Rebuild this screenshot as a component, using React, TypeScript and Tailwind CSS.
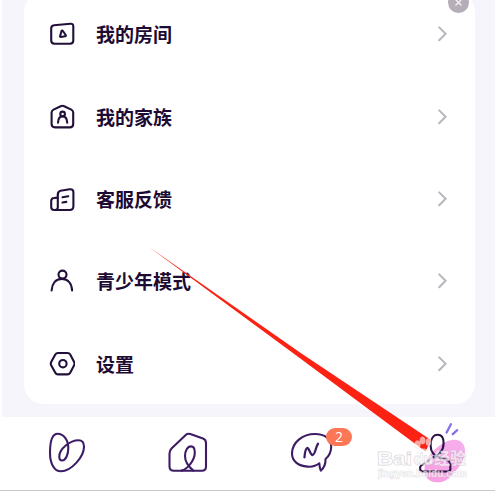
import type { ReactNode } from "react";

const rows: { label: string; icon: ReactNode }[] = [
  {
    label: "我的房间",
    icon: (
      <>
        <path d="M5 4.3 L21.5 2.7 Q24.3 2.5 24.3 5.3 V19.5 Q24.3 22.7 21 22.7 H5.5 Q2.2 22.7 2.2 19.5 V7.5 Q2.2 4.6 5 4.3 Z" />
        <path d="M12.6 9.8 Q13.3 9 13.9 10 L16.7 14 Q17.2 15 16.1 15.2 L11.8 16 Q10.9 16 11.1 15 Z" />
      </>
    ),
  },
  {
    label: "我的家族",
    icon: (
      <>
        <path d="M11.7 2.2 Q13.5 1.4 15.2 2.2 L22.3 5.6 Q24.2 6.6 24.2 8.6 V20 Q24.2 23.4 20.8 23.4 H6 Q2.6 23.4 2.6 20 V8.6 Q2.6 6.6 4.5 5.6 Z" />
        <circle cx="13.6" cy="9.9" r="2.3" />
        <path d="M9 18.7 C9.2 15 11 12.4 13.6 12.4 C16.2 12.4 18 15 18.2 18.7" />
      </>
    ),
  },
  {
    label: "客服反馈",
    icon: (
      <>
        <path d="M8.8 8.5 Q8.8 5.5 11.5 4.8 L20.7 3.3 Q24.4 2.9 24.4 6.3 V20.3 Q24.4 24 20.7 24 H5.2 Q2.2 24 2.2 21 V15 Q2.2 12.2 5 12 L8.5 11.6" />
        <path d="M8.8 8.5 V21.5 Q8.8 24 6 24 M13.5 11.2 L19.3 10.2 M13.5 16.5 L17.3 15.9" />
      </>
    ),
  },
  {
    label: "青少年模式",
    icon: (
      <>
        <circle cx="13.5" cy="6.6" r="4" />
        <path d="M2.6 22.5 C3 15.5 6.6 10.9 12.8 10.9 C19 10.9 22.8 15.5 23.1 22.5" />
      </>
    ),
  },
  {
    label: "设置",
    icon: (
      <>
        <path d="M9 2 H18.5 Q20.3 2 21.2 3.6 L25 10.8 Q26 12.7 25 14.5 L21.2 21.7 Q20.3 23.4 18.5 23.4 H9 Q7.2 23.4 6.3 21.7 L2.3 14.5 Q1.3 12.7 2.3 10.8 L6.3 3.6 Q7.2 2 9 2 Z" />
        <circle cx="13.9" cy="12.7" r="3.7" />
      </>
    ),
  },
];

function NavIcon({ children }: { children: ReactNode }) {
  return (
    <div className="flex w-[124px] shrink-0 justify-center pt-1">
      <svg className="h-16 w-16" viewBox="0 0 64 64" fill="none" stroke="#3d1c66" strokeWidth="2.1" strokeLinecap="round" strokeLinejoin="round">
        {children}
      </svg>
    </div>
  );
}

export default function App() {
  return (
    <div className="relative flex h-[491px] w-[495px] flex-col overflow-hidden bg-white font-['Noto_Sans_CJK_SC',sans-serif]">
      <div className="ml-0.5 h-[417px] shrink-0 bg-[#f6f5fc] pr-5 pl-[22px]">
        <div className="-mt-2 h-[412px] rounded-[20px] bg-white pt-px">
          {rows.map((row) => (
            <div key={row.label} className="flex h-[82.4px] items-center pr-7 pl-[25px]">
              <svg className="h-[26px] w-[26px] shrink-0" viewBox="0 0 26 26" fill="none" stroke="#22103a" strokeWidth="2.1" strokeLinecap="round" strokeLinejoin="round">
                {row.icon}
              </svg>
              <span className="ml-[21px] flex-1 text-[19px] leading-6 font-bold text-[#1d0b33]">{row.label}</span>
              <svg className="h-4 w-[9px]" viewBox="0 0 9 16" fill="none" stroke="#b9b5bd" strokeWidth="2" strokeLinecap="round">
                <path d="M1.2 1.4 L7.6 7.8 L1.2 14.2" />
              </svg>
            </div>
          ))}
        </div>
      </div>

      <nav className="flex h-[73px] shrink-0 bg-white pl-1">
        <NavIcon>
          <path d="M23.7 12.8 C18 12.8 16 22 16 32 C16 42 20 50.3 27 50.3 C37 50.3 50 36 50 25.7 C50 21 48 19.2 44.5 19.2 C36 19.2 25.3 28 25.3 35.5 C25.3 38 26 39.5 28 39.5 C32 39.5 34.3 33 34.3 27 C34.3 19 29.5 12.8 23.7 12.8 Z" />
        </NavIcon>
        <NavIcon>
          <path d="M28 13.7 Q30 12.3 32.3 13 L45 17.5 Q48 18.7 48 22 V45.5 Q48 49.8 43.7 49.8 H16 Q11.5 49.8 11.5 45.5 V32.5 Q11.5 29.5 13.5 27.5 Z" />
          <path d="M23.5 49.6 C29 48.5 36.8 39.5 36.8 31.5 C36.8 27.7 35.5 25.4 33 25.4 C29.5 25.4 27 29.8 27 35 C27 41 31 46 35.3 49.6" />
        </NavIcon>
        <NavIcon>
          <path d="M38.8 49.6 C37.8 47.5 37.5 45 37.3 42.3 C34 45 30 46 25.5 45.6 C16 45 10 40 10 32.5 C10 21.5 20.5 13 33 13 C43 13 49.2 18 49.2 25.5 C49.2 30.5 47.2 35 43.5 38 C43.7 42.5 42.5 46.5 38.8 49.6 Z" />
          <path d="M22.5 36.3 C22.8 31.5 23.6 27.7 25.3 27 C27 26.5 28.2 34 30.6 34 C33.3 34 33.7 25.5 36 22.7" strokeWidth="2.3" />
        </NavIcon>
        <NavIcon>
          <defs>
            <linearGradient id="blob" x1="1" y1="0" x2="0" y2="1">
              <stop offset="0" stopColor="#f7b0ee" />
              <stop offset="1" stopColor="#f79ce2" />
            </linearGradient>
          </defs>
          <path d="M47 18.8 C54 18 59.5 22.5 59 31 C58.5 39.5 53 46 48 52 C43 58 38 61.8 30 61.3 C23 60.8 18.5 56.5 18.5 48 C18.5 40 24 33 30 27.5 C35.5 22.3 41 19.4 47 18.8 Z" fill="url(#blob)" stroke="none" />
          <path d="M44.9 3.2 L40.6 11.5 M51.2 9.2 L46.8 13.2" stroke="#8272e8" strokeWidth="2.3" />
          <path d="M25.5 37 C33.5 34.5 37.6 29.5 37.6 22 C37.6 16.5 35.2 13.8 31.6 13.8 C27.3 13.8 24.6 18 24.6 24.5 C24.6 30.5 28 35.3 35 37 C38.5 38.2 44 39 44.3 43 V48 Q44.3 50.5 41.8 50.5 H16.7 Q14.2 50.5 14.2 48 V46 C14.5 43.5 23 41 25.5 37 Z" stroke="#2c1245" strokeWidth="2.1" />
        </NavIcon>
      </nav>
      <div className="h-px shrink-0 bg-[#c9c9c9]" />

      <span className="absolute top-[428px] left-[326px] flex h-[17.5px] w-[26px] items-center justify-center rounded-full bg-[#fb7756] font-['Open_Sans',sans-serif] text-[14px] leading-none text-white">
        2
      </span>

      <button className="absolute -top-2 left-[448px] h-[21px] w-[21px] rounded-full bg-[#b5adb8]">
        <svg className="h-full w-full" viewBox="0 0 21 21" stroke="#f4f1f5" strokeWidth="1.3">
          <path d="M7.5 7.5 L13.5 13.5 M13.5 7.5 L7.5 13.5" />
        </svg>
      </button>

      {/* pointer and watermark over the page */}
      <svg className="pointer-events-none absolute inset-0 h-[491px] w-[495px]" viewBox="0 0 495 491">
        <polygon points="149,247 300,352.5 431,440 425.5,451.5 300,358.3" fill="#fc2213" />
        <g fill="#fff" fillOpacity="0.6" stroke="#c4bcc4" strokeOpacity="0.4" strokeWidth="0.5">
          <ellipse cx="417.5" cy="444.5" rx="3" ry="4" />
          <ellipse cx="422.5" cy="440.5" rx="2.8" ry="3.8" />
          <ellipse cx="428.5" cy="442" rx="2.8" ry="3.8" />
          <path d="M423 448.5 C428 448.5 428.5 453 431.5 455.5 C436 459.5 433 465.5 428 465 C424 464.5 422 464.5 419 465 C413 465.5 411.5 459.5 415 456 C418 453 419 448.5 423 448.5 Z" />
        </g>
        <g fill="#fff" fillOpacity="0.65" stroke="#bdb9be" strokeOpacity="0.6" paintOrder="stroke">
          <text x="377" y="465" fontFamily="Liberation Sans, sans-serif" fontSize="19" fontWeight="700" strokeWidth="1" textLength="35" lengthAdjust="spacingAndGlyphs">Bai</text>
          <text x="414" y="464" fontFamily="Liberation Sans, sans-serif" fontSize="14" fontWeight="700" strokeWidth="0.8" textLength="19" lengthAdjust="spacingAndGlyphs">du</text>
          <text x="434" y="464" fontFamily="Noto Sans CJK SC, sans-serif" fontSize="16" fontWeight="700" strokeWidth="0.8" textLength="32" lengthAdjust="spacingAndGlyphs">经验</text>
          <text x="378" y="477" fontFamily="Liberation Sans, sans-serif" fontSize="10" fontWeight="700" strokeWidth="0.6" textLength="89" lengthAdjust="spacingAndGlyphs">jingyan.baidu.com</text>
        </g>
      </svg>
    </div>
  );
}
